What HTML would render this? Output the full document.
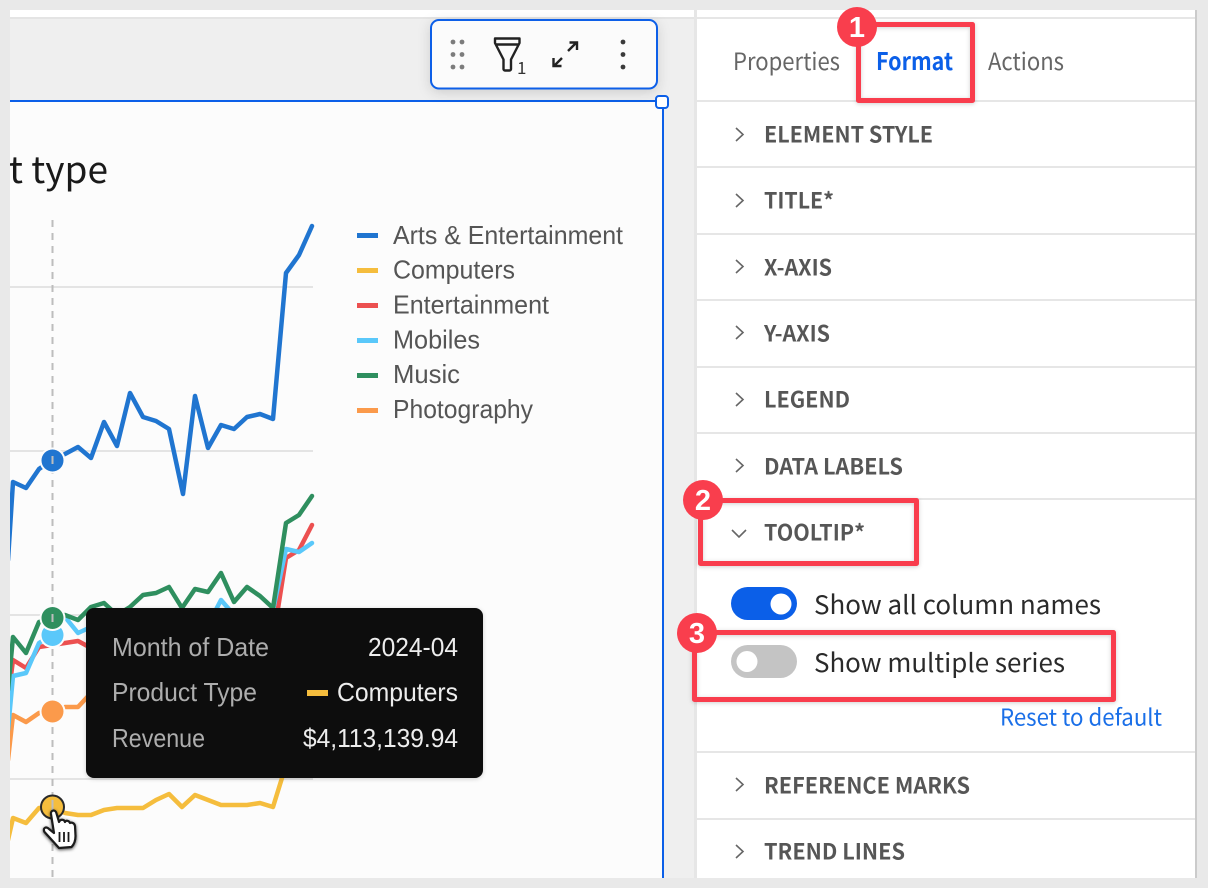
<!DOCTYPE html>
<html><head><meta charset="utf-8">
<style>
html,body{margin:0;padding:0;width:1208px;height:888px;overflow:hidden;background:#e9e9e9}
svg{display:block}
.p{font-family:"Noto Sans CJK JP","Liberation Sans",sans-serif}
.h{font-family:"Noto Sans CJK JP","Liberation Sans",sans-serif;font-size:22px;font-weight:700;fill:#565656}
.l{font-family:"Liberation Sans",sans-serif;font-size:26px;fill:#555}
.t{font-family:"Liberation Sans",sans-serif;font-size:26px}
</style></head>
<body>
<svg width="1208" height="888" viewBox="0 0 1208 888" xmlns="http://www.w3.org/2000/svg">
<defs>
<filter id="sh" x="-20%" y="-20%" width="140%" height="150%"><feDropShadow dx="0" dy="3" stdDeviation="6" flood-color="#000" flood-opacity=".14"/></filter>
<filter id="rs" x="-10%" y="-10%" width="120%" height="120%"><feDropShadow dx="0" dy="1" stdDeviation="2" flood-color="#000" flood-opacity=".18"/></filter>
<filter id="hs" x="-30%" y="-30%" width="160%" height="160%"><feDropShadow dx="0" dy="1" stdDeviation="1.500" flood-color="#000" flood-opacity=".7"/></filter>
<clipPath id="cc"><rect x="10" y="102" width="652" height="776"/></clipPath>
</defs>
<rect width="1208" height="888" fill="#e9e9e9"/>
<rect x="10" y="10" width="1186" height="868" fill="#efefef"/>
<rect x="10" y="10" width="1186" height="7" fill="#fff"/>
<rect x="10" y="17" width="1186" height="2" fill="#e4e4e4"/>
<rect x="694" y="10" width="3" height="868" fill="#e6e6e6"/>

<!-- chart -->
<rect x="10" y="101" width="653" height="777" fill="#fcfcfc"/>
<rect x="10" y="100" width="654" height="2" fill="#0b5fe8"/>
<rect x="662" y="100" width="2" height="778" fill="#0b5fe8"/>
<g fill="#e4e4e4"><rect x="10" y="286" width="303" height="2"/><rect x="10" y="450" width="303" height="2"/><rect x="10" y="614" width="303" height="2"/><rect x="10" y="778" width="303" height="2"/></g>
<text x="9" y="183" class="p" font-size="37" fill="#1a1a1a" textLength="99" lengthAdjust="spacingAndGlyphs">t type</text>
<line x1="52.5" y1="220" x2="52.5" y2="878" stroke="#bdbdbd" stroke-width="2" stroke-dasharray="7 6"/>
<g clip-path="url(#cc)" fill="none" stroke-width="4.500" stroke-linejoin="round" stroke-linecap="round">
<polyline stroke="#fb9a4b" points="8,760 13,715 26,722 39,713 52,711 65,707 78,707 91,693 110,690"/>
<polyline stroke="#f5bd3d" points="8,840 13,818 26,823 39,808 52,807 65,813 78,815 91,815 104,810 117,808 130,808 143,808 156,800 169,794 182,807 195,795 208,800 221,805 234,805 247,805 260,803 273,807 286,765"/>
<polyline stroke="#ec5050" points="8,700 13,660 26,668 39,647 52,645 65,643 78,641 91,648 110,650 273,640 286,558 299,550 312,525"/>
<polyline stroke="#5ac8fa" points="8,730 13,676 26,673 39,643 52,635 65,617 78,633 91,627 110,620 208,625 221,600 234,615 273,610 286,549 299,552 312,543"/>
<polyline stroke="#2f8f5f" points="8,690 13,637 26,653 39,622 52,618 65,615 78,620 91,607 104,603 117,615 130,607 143,595 156,593 169,587 182,608 195,589 208,592 221,573 234,602 247,587 260,596 273,608 286,523 299,515 312,496"/>
<polyline stroke="#2075d0" points="8,560 13,482 26,488 39,469 52,460 65,454 78,447 91,458 104,422 117,446 130,393 143,417 156,421 169,429 183,494 195,396 208,448 221,425 234,429 247,417 260,414 273,419 286,273 299,255 312,226"/>
</g>
<circle cx="52.5" cy="460.500" r="13" fill="#fcfcfc"/><circle cx="52.5" cy="460.500" r="11" fill="#2075d0"/>
<circle cx="52.5" cy="635" r="13" fill="#fcfcfc"/><circle cx="52.5" cy="635" r="11" fill="#5ac8fa"/>
<circle cx="52.5" cy="618" r="13" fill="#fcfcfc"/><circle cx="52.5" cy="618" r="11" fill="#2f8f5f"/>
<circle cx="52.5" cy="711.500" r="13" fill="#fcfcfc"/><circle cx="52.5" cy="711.500" r="11" fill="#fb9a4b"/>
<circle cx="52.5" cy="807" r="11.500" fill="#f5bd3d" stroke="#2a2a2a" stroke-width="2"/>
<g stroke="#bdbdbd" stroke-width="2"><line x1="52.5" y1="456" x2="52.5" y2="464"/><line x1="52.5" y1="614" x2="52.5" y2="622"/><line x1="52.5" y1="800" x2="52.5" y2="813"/></g>

<!-- legend -->
<g><rect x="357" y="233" width="21" height="5" fill="#2075d0"/><rect x="357" y="268" width="21" height="5" fill="#f5bd3d"/><rect x="357" y="303" width="21" height="5" fill="#ec5050"/><rect x="357" y="338" width="21" height="5" fill="#5ac8fa"/><rect x="357" y="373" width="21" height="5" fill="#2f8f5f"/><rect x="357" y="408" width="21" height="5" fill="#fb9a4b"/></g>
<text x="393" y="244" class="l" textLength="230" lengthAdjust="spacingAndGlyphs">Arts &amp; Entertainment</text>
<text x="393" y="278.500" class="l" textLength="122" lengthAdjust="spacingAndGlyphs">Computers</text>
<text x="393" y="313.500" class="l" textLength="156" lengthAdjust="spacingAndGlyphs">Entertainment</text>
<text x="393" y="348.500" class="l" textLength="87" lengthAdjust="spacingAndGlyphs">Mobiles</text>
<text x="393" y="383" class="l" textLength="67" lengthAdjust="spacingAndGlyphs">Music</text>
<text x="393" y="418" class="l" textLength="140" lengthAdjust="spacingAndGlyphs">Photography</text>

<!-- tooltip -->
<rect x="86" y="608" width="397" height="170" rx="8" fill="#0a0a0a" filter="url(#rs)"/>
<text x="112" y="656" class="t" fill="#adadad" textLength="157" lengthAdjust="spacingAndGlyphs">Month of Date</text>
<text x="112" y="701" class="t" fill="#adadad" textLength="145" lengthAdjust="spacingAndGlyphs">Product Type</text>
<text x="112" y="747" class="t" fill="#adadad" textLength="93" lengthAdjust="spacingAndGlyphs">Revenue</text>
<text x="368" y="656" class="t" fill="#ededed" textLength="90" lengthAdjust="spacingAndGlyphs">2024-04</text>
<rect x="307" y="690" width="21" height="6" fill="#f5bd3d"/>
<text x="337" y="701" class="t" fill="#ededed" textLength="121" lengthAdjust="spacingAndGlyphs">Computers</text>
<text x="303" y="747" class="t" fill="#ededed" textLength="155" lengthAdjust="spacingAndGlyphs">$4,113,139.94</text>

<!-- cursor -->
<g filter="url(#hs)">
<path d="M51 814 C50.500 810 55.500 809 56.500 813.500 L59 822 C60.500 819 64 819 65 822 C66 820 69 820.500 70 823 C71.500 822 74.500 823 75 826 L75.500 836 C75.500 841 73.500 845 71.500 847 L59 848 L50 838 L44.500 832 C42.500 828 46 826 49 829 L54 833 Z" fill="#fff" stroke="#1a1a1a" stroke-width="2.200" stroke-linejoin="round"/>
<path d="M59.500 832v10M64 832v10M68.500 832v10" stroke="#1a1a1a" stroke-width="1.800" fill="none"/>
</g>

<!-- toolbar -->
<rect x="431" y="20" width="226" height="68.500" rx="8" fill="#fbfbfb" stroke="#0b5fe8" stroke-width="2" filter="url(#sh)"/>
<g fill="#7c7c7c"><circle cx="453" cy="42" r="2.400"/><circle cx="462" cy="42" r="2.400"/><circle cx="453" cy="54.500" r="2.400"/><circle cx="462" cy="54.500" r="2.400"/><circle cx="453" cy="67" r="2.400"/><circle cx="462" cy="67" r="2.400"/></g>
<path d="M495 38.500h24.500v4.500l-8.500 16.500v9.500a1.500 1.500 0 0 1-1.500 1.500h-4.500a1.500 1.500 0 0 1-1.500-1.500v-9.500L495 43zM495.500 44.500h23.500" fill="none" stroke="#222" stroke-width="2.400" stroke-linejoin="round"/>
<text x="517" y="74" class="p" font-size="17" fill="#333">1</text>
<path d="M554 66l8-8M568 51l9-9M569.500 42.500h7.500v7.500M553.500 58v8h8" fill="none" stroke="#222" stroke-width="2.400"/>
<g fill="#3a3a3a"><circle cx="623" cy="42" r="2.400"/><circle cx="623" cy="54.500" r="2.400"/><circle cx="623" cy="67" r="2.400"/></g>
<rect x="656" y="96" width="12" height="12" rx="3" fill="#fff" stroke="#0b5fe8" stroke-width="2"/>

<!-- panel -->
<rect x="697" y="10" width="498" height="868" fill="#fff"/>
<rect x="1195" y="10" width="2" height="868" fill="#cbcbcb"/>
<rect x="697" y="17" width="498" height="2" fill="#e6e6e6"/>
<g fill="#e6e6e6"><rect x="697" y="100" width="498" height="2"/><rect x="697" y="166" width="498" height="2"/><rect x="697" y="233" width="498" height="2"/><rect x="697" y="299" width="498" height="2"/><rect x="697" y="366" width="498" height="2"/><rect x="697" y="432" width="498" height="2"/><rect x="697" y="498" width="498" height="2"/><rect x="697" y="751" width="498" height="2"/><rect x="697" y="818" width="498" height="2"/></g>
<text x="733" y="70" class="p" font-size="24" fill="#666" textLength="107" lengthAdjust="spacingAndGlyphs">Properties</text>
<text x="876" y="70" class="p" font-size="24" font-weight="700" fill="#0b5fe8" textLength="77" lengthAdjust="spacingAndGlyphs">Format</text>
<text x="988" y="70" class="p" font-size="24" fill="#666" textLength="76" lengthAdjust="spacingAndGlyphs">Actions</text>
<g fill="none" stroke="#666" stroke-width="1.600">
<path d="M736 128l7 6.500-7 6.500M736 194l7 6.500-7 6.500M736 260l7 6.500-7 6.500M736 326l7 6.500-7 6.500M736 393l7 6.500-7 6.500M736 459l7 6.500-7 6.500M736 778l7 6.500-7 6.500M736 845l7 6.500-7 6.500M732 530l7 7 7-7"/>
</g>
<text x="764" y="142.500" class="h" textLength="169" lengthAdjust="spacingAndGlyphs">ELEMENT STYLE</text>
<text x="764" y="208.500" class="h" textLength="70" lengthAdjust="spacingAndGlyphs">TITLE*</text>
<text x="764" y="275.500" class="h" textLength="68" lengthAdjust="spacingAndGlyphs">X-AXIS</text>
<text x="764" y="341.500" class="h" textLength="66" lengthAdjust="spacingAndGlyphs">Y-AXIS</text>
<text x="764" y="407.500" class="h" textLength="86" lengthAdjust="spacingAndGlyphs">LEGEND</text>
<text x="764" y="474.500" class="h" textLength="139" lengthAdjust="spacingAndGlyphs">DATA LABELS</text>
<text x="764" y="540.500" class="h" textLength="101" lengthAdjust="spacingAndGlyphs">TOOLTIP*</text>
<text x="764" y="793.500" class="h" textLength="206" lengthAdjust="spacingAndGlyphs">REFERENCE MARKS</text>
<text x="764" y="859.500" class="h" textLength="141" lengthAdjust="spacingAndGlyphs">TREND LINES</text>

<rect x="731" y="587" width="66" height="33" rx="16.500" fill="#0b5fe8"/>
<circle cx="781" cy="604" r="10.500" fill="#fff"/>
<rect x="731" y="645" width="66" height="33" rx="16.500" fill="#c4c4c4"/>
<circle cx="747" cy="661.500" r="10.500" fill="#fff"/>
<text x="814" y="614" class="p" font-size="25.500" fill="#2a2a2a" textLength="287" lengthAdjust="spacingAndGlyphs">Show all column names</text>
<text x="814" y="672" class="p" font-size="25.500" fill="#2a2a2a" textLength="251" lengthAdjust="spacingAndGlyphs">Show multiple series</text>
<text x="1000" y="725.500" class="p" font-size="23" fill="#1a6fe8" textLength="162" lengthAdjust="spacingAndGlyphs">Reset to default</text>

<!-- annotations -->
<g fill="none" stroke="#f93e4d" stroke-width="5" stroke-linejoin="round" filter="url(#rs)">
<rect x="858.500" y="24.500" width="114" height="76"/>
<rect x="700.500" y="500.500" width="216" height="63"/>
<rect x="694.500" y="632.500" width="419" height="67"/>
</g>
<g fill="#f93e4d"><circle cx="857" cy="27" r="20"/><circle cx="703" cy="500" r="20"/><circle cx="697" cy="633" r="20"/></g>
<g font-size="29" font-weight="700" fill="#fff" text-anchor="middle" font-family="Liberation Sans, sans-serif">
<text x="857" y="37">1</text><text x="703" y="510">2</text><text x="697" y="643">3</text>
</g>
</svg>
</body></html>
